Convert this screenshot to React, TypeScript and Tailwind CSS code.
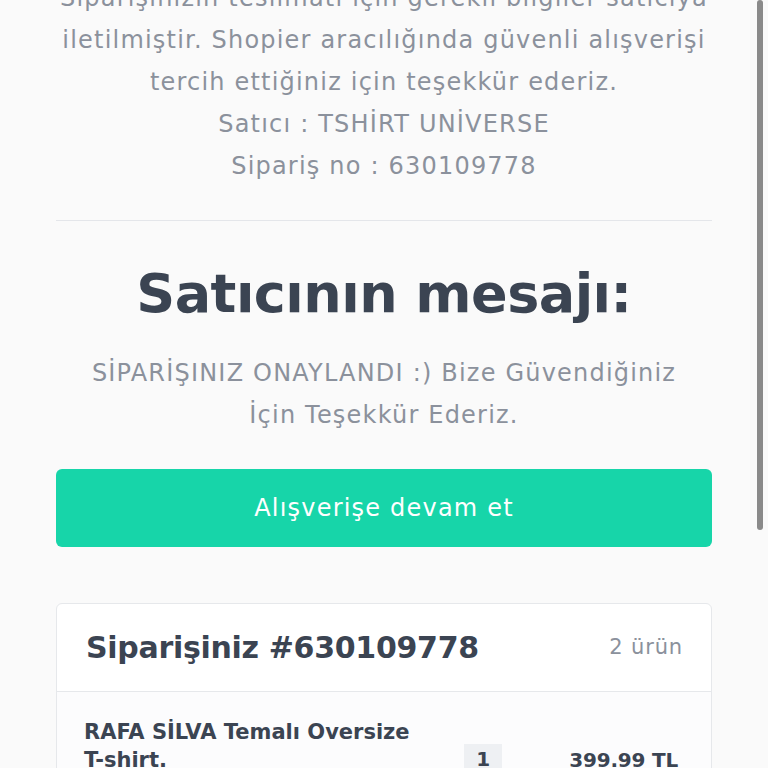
import React from 'react';

const FONT = "font-['DejaVu_Sans',_'Liberation_Sans',_sans-serif]";

export default function App() {
  return (
    <div className={`relative h-[768px] overflow-hidden bg-[#fafafa] ${FONT}`}>
      <div className="flex flex-col px-[56px] -mt-[23px]">
        {/* Teslimat bilgisi */}
        <div className="text-center text-[24px] leading-[42px] tracking-[0.05em] text-[#8b919c] whitespace-nowrap">
          <p>Siparişinizin teslimatı için gerekli bilgiler satıcıya</p>
          <p>iletilmiştir. Shopier aracılığında güvenli alışverişi</p>
          <p>tercih ettiğiniz için teşekkür ederiz.</p>
          <p>Satıcı : TSHİRT UNİVERSE</p>
          <p>Sipariş no : 630109778</p>
        </div>

        <div className="mt-[33px] h-px bg-[#e4e6ea]" />

        {/* Satıcının mesajı */}
        <h1 className="mt-[40px] text-center text-[54px] leading-[65px] font-bold text-[#3b4452] tracking-[-0.01em]">
          Satıcının mesajı:
        </h1>
        <div className="mt-[26px] text-center text-[24px] leading-[42px] tracking-[0.05em] text-[#8b919c] whitespace-nowrap">
          <p>SİPARİŞINIZ ONAYLANDI :) Bize Güvendiğiniz</p>
          <p>İçin Teşekkür Ederiz.</p>
        </div>

        <button className="mt-[33px] h-[78px] w-full rounded-[6px] bg-[#17d5a9] text-white text-[24px] tracking-[0.05em]">
          Alışverişe devam et
        </button>

        {/* Sipariş kartı */}
        <div className="mt-[56px] rounded-[6px] border border-[#e6e8eb] bg-white overflow-hidden">
          <div className="flex items-center justify-between h-[88px] pl-[29px] pr-[28px] border-b border-[#e6e8eb]">
            <span className="text-[30px] font-bold text-[#3b4452] tracking-[-0.01em]">Siparişiniz #630109778</span>
            <span className="text-[21px] tracking-[0.04em] text-[#8b919c]">2 ürün</span>
          </div>
          <div className="bg-[#fcfcfd] pl-[27px] pr-[33px] pt-[26px] pb-6 flex items-end">
            <div className="text-[21px] leading-[28px] font-bold text-[#3b4452]">
              <p>RAFA SİLVA Temalı Oversize</p>
              <p>T-shirt.</p>
            </div>
            <div className="ml-auto flex items-end">
              <span className="w-[38px] h-[30px] flex items-center justify-center bg-[#eef0f3] text-[20px] font-bold text-[#3b4452]">1</span>
              <span className="ml-[67px] text-[20px] leading-[28px] font-bold text-[#3b4452] tracking-[-0.01em]">399.99 TL</span>
            </div>
          </div>
        </div>
      </div>

      {/* overlay scrollbar */}
      <div className="absolute top-0 right-[5px] w-[6px] h-[530px] rounded-full bg-[#8a8a8a]" />
    </div>
  );
}
